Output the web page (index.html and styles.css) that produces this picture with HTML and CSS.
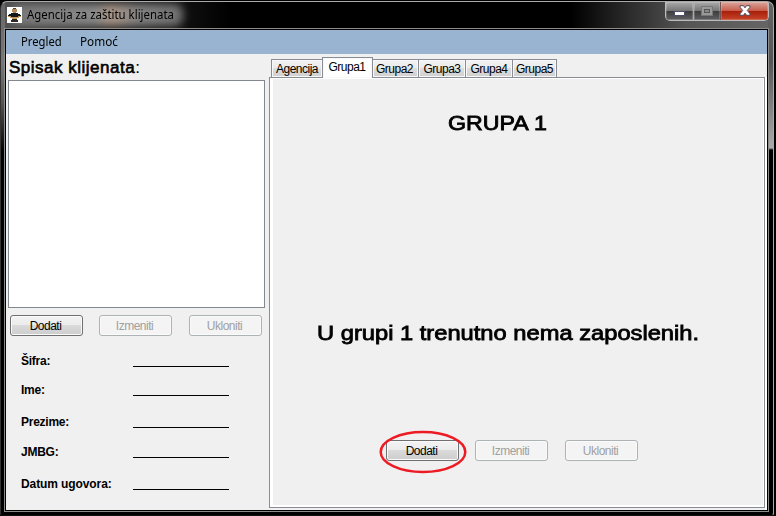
FILE: index.html
```
<!DOCTYPE html>
<html lang="sr-Latn">
<head>
<meta charset="utf-8">
<title>Agencija za zaštitu klijenata</title>
<link rel="stylesheet" href="styles.css">
</head>
<body>
<div class="window">
  <header class="titlebar">
    <svg class="app-icon" width="15" height="16" viewBox="0 0 15 16" shape-rendering="crispEdges">
      <rect width="15" height="16" fill="#fff"/>
      <path d="M6 1h3v1h1v3H9v1H6V5H5V2h1z" fill="#b48b5d"/>
      <path d="M6 1h3v1H6z" fill="#584024"/>
      <path d="M4 6h7v1h2v1h1v1H1V8h1V7h2z" fill="#15181b"/>
      <path d="M1 9h13v1h-2v1H3v-1H1z" fill="#c69862"/>
      <path d="M4 9h7v1H4z" fill="#15181b"/>
      <path d="M5 11h5v2h1v2H4v-2h1z" fill="#302922"/>
      <path d="M5 11h5v1H5z" fill="#c69862"/>
    </svg>
    <h1 class="title"><span>Agencija za zaštitu klijenata</span></h1>
    <div class="controls">
      <span class="control minimize"><svg width="11" height="5"><rect x=".5" y=".5" width="10" height="4" fill="#fff" stroke="#4e4f67"/></svg></span>
      <span class="control maximize"><svg width="12" height="10"><rect x="2" y="2" width="8" height="6" fill="#555" stroke="#999" stroke-width="3"/><rect x=".5" y=".5" width="11" height="9" fill="none" stroke="#777"/><rect x="3.500" y="3.500" width="5" height="3" fill="#888" stroke="#555"/></svg></span>
      <span class="control close"><svg width="12" height="11" viewBox="0 0 12 11"><path d="M1 .7h3.500L6 2.800 7.500.7H11v1.500L8.300 5.500 11 8.800v1.500H7.500L6 8.200l-1.500 2.100H1V8.800l2.700-3.300L1 2.200z" fill="#fff" stroke="#544958" stroke-width="1"/></svg></span>
    </div>
  </header>
  <div class="frame">
    <nav class="menu"><span class="pregled">Pregled</span><span class="pomoc">Pomoć</span></nav>
    <main class="content">
      <section class="clients">
        <h2>Spisak klijenata<span>:</span></h2>
        <div class="listbox"></div>
        <div class="buttons">
          <button>Dodati</button><button disabled>Izmeniti</button><button disabled>Ukloniti</button>
        </div>
        <dl class="details">
          <dt>Šifra:</dt><dd></dd>
          <dt>Ime:</dt><dd></dd>
          <dt>Prezime:</dt><dd></dd>
          <dt>JMBG:</dt><dd></dd>
          <dt class="date">Datum ugovora:</dt><dd></dd>
        </dl>
      </section>
      <section class="groups">
        <div class="tabs">
          <span class="tab agency">Agencija</span><span class="tab active">Grupa1</span><span class="tab second">Grupa2</span><span class="tab">Grupa3</span><span class="tab">Grupa4</span><span class="tab">Grupa5</span>
        </div>
        <div class="panel">
          <h2 class="group-name"><span>GRUPA 1</span></h2>
          <p class="message"><span>U grupi 1 trenutno nema zaposlenih.</span></p>
          <div class="buttons">
            <div class="highlighted"><button>Dodati</button><svg class="ring" width="88" height="44"><ellipse cx="44" cy="22" rx="42.300" ry="20" fill="none" stroke="#ed1c24" stroke-width="2.500"/></svg></div>
            <button disabled>Izmeniti</button><button disabled>Ukloniti</button>
          </div>
        </div>
      </section>
    </main>
  </div>
</div>
</body>
</html>
```
FILE: styles.css
```
* { box-sizing: border-box; }
body { margin: 0; width: 776px; height: 516px; overflow: hidden; background: #000; font-family: "Liberation Sans", Arial, sans-serif; color: #000; }
h1, h2, p, dl, dt, dd { margin: 0; font-weight: normal; }
.window {
  width: 774px; height: 515px; margin-top: 1px; overflow: hidden;
  border: 1px solid #aaa; border-left-color: #333; border-bottom-color: #111; border-radius: 7px 7px 3px 3px;
  background:
    linear-gradient(#646464, #555 60px, #aaa 146px, #000 148px) right / 5px 100% no-repeat,
    linear-gradient(#686868, #777 60px, #555 100px, #000 150px) left / 4px 100% no-repeat,
    linear-gradient(90deg, #555 0, #444 20px, #0a0a0a 200px, #000 230px, #000 570px, #555 685px, #666) top / 100% 27px no-repeat,
    #000;
}
.titlebar { height: 26px; display: flex; padding-left: 6px; }
.app-icon { margin-top: 5px; position: relative; z-index: 1; }
.title { position: relative; margin: 5px 0 0 5px; width: 149px; height: 16px; font: 12px/16px "Noto Sans", sans-serif; white-space: nowrap; }
.title::before { content: ""; position: absolute; inset: -3px -7px -3px -16px; border-radius: 8px; filter: blur(4px); background: linear-gradient(90deg, #777, #8a8a8a 85px, #ad9788 100px, #858585 125px, #707070); }
.title span { position: relative; display: inline-block; transform: scaleX(.95); transform-origin: left; }
.controls { position: relative; display: flex; width: 104px; height: 20px; margin: -1px 4px 0 auto; border: 1px solid #bbb; border-top-color: #777; border-radius: 0 0 5px 5px; overflow: hidden; }
.control { display: flex; align-items: center; justify-content: center; height: 100%; background: linear-gradient(#aaa, #777 48%, #3d3d3d 52%, #606064); box-shadow: inset 0 0 0 1px #ffffff30; }
.control svg { display: block; }
.minimize { width: 28px; border-right: 1px solid #aaa; padding-top: 4px; }
.maximize { width: 27px; border-right: 1px solid #755; }
.close { width: 47px; padding-bottom: 1px; background: linear-gradient(#d9a69b, #c9604f 47%, #a91f0b 52%, #c64529); }
.frame { position: relative; width: 765px; height: 484px; margin-left: 3px; padding: 1px; border: 1px solid #8c8c88; background: #000; }
.menu { height: 24px; background: #99b4d1; font: 12px/23px "Noto Sans", sans-serif; display: flex; }
.menu span { transform: scaleX(.94); transform-origin: left; white-space: nowrap; }
.menu .pomoc { transform: scaleX(.98); }
.pregled { width: 59px; margin-left: 15px; }
.content { height: 456px; display: flex; background: #f0f0f0; }
.clients { width: 263px; padding-left: 2px; flex: none; }
.clients h2 { height: 26px; padding-left: 1px; font: 17px/27px "Liberation Sans", sans-serif; letter-spacing: .5px; -webkit-text-stroke: .6px #000; white-space: nowrap; }
.clients h2 span { -webkit-text-stroke: 0; }
.listbox { width: 257px; height: 228px; border: 1px solid #828790; background: #fff; }
.buttons { display: flex; }
.clients .buttons { margin: 7px 0 0 2px; gap: 16px 17px; }
.clients .buttons button:first-child { margin-right: -1px; }
button { flex: none; width: 73px; height: 21px; padding: 1px 2px 0 0; border: 1px solid #707070; border-radius: 3px; box-shadow: inset 0 0 0 1px #fafafa; background: linear-gradient(#f3f3f3, #ebebeb 49%, #dadada 50%, #cdcdcd); font: 12px/18px "Liberation Sans", sans-serif; letter-spacing: -.5px; color: #000; }
button:disabled { border-color: #adb2b5; background: #f4f4f4; color: #a0a0a0; letter-spacing: -.5px; }
.details { display: grid; grid-template-columns: 112px 96px; grid-template-rows: 31px 29px 32px 30px 32px; padding: 0 0 0 13px; }
.details dt { align-self: end; position: relative; top: 2px; font: bold 12px/16px "Liberation Sans", sans-serif; letter-spacing: -.25px; white-space: nowrap; }
.details .date { letter-spacing: -.1px; }
.details dd { align-self: end; height: 1px; background: #000; }
.groups { width: 498px; background: linear-gradient(90deg, transparent 496px, #fff 496px); background-position: 0 23px; background-repeat: no-repeat; }
.tabs { height: 23px; padding: 3px 0 0 2px; display: flex; align-items: flex-end; }
.tab { width: 48px; height: 18px; margin-right: -1px; border: 1px solid #898c95; border-bottom: 0; background: linear-gradient(#f2f2f2, #ebebeb 49%, #dddddd 50%, #cfcfcf); box-shadow: inset 0 0 0 1px #f8f8f8; font-size: 12px; line-height: 19px; text-align: center; letter-spacing: -.5px; white-space: nowrap; }
.agency { width: 52px; letter-spacing: -.5px; }
.tab.second { width: 47px; padding-right: 2px; }
.tab.active { width: 51px; height: 21px; margin-bottom: -1px; background: #fff; position: relative; line-height: 18px; padding-right: 1px; }
.tab:last-child { width: 45px; }
.panel { width: 496px; height: 431px; border: 1px solid #898c95; box-shadow: inset 3px 1px #fff, inset -1px -2px #fff; background: #f0f0f0; }
.group-name { padding: 31px 0 0 178px; height: 57px; font: 20px/28px "Liberation Sans", sans-serif; white-space: nowrap; -webkit-text-stroke: .8px #000; }
.group-name span, .message span { display: inline-block; transform-origin: left; }
.group-name span { transform: scaleX(1.16); }
.message { height: 305px; padding: 184px 0 0 47px; font: 20px/28px "Liberation Sans", sans-serif; white-space: nowrap; -webkit-text-stroke: .8px #000; }
.message span { transform: scaleX(1.185); }
.panel .buttons { margin-left: 116px; gap: 17px; }
.highlighted { position: relative; width: 72px; }
.ring { position: absolute; left: -7px; top: -10px; }
```
